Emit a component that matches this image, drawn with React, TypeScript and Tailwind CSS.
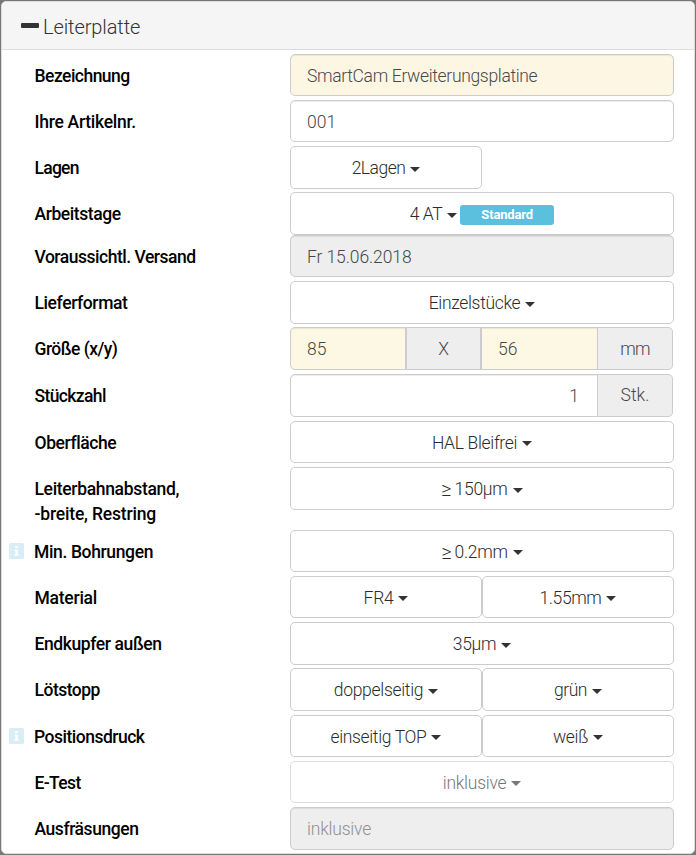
import type { ReactNode } from "react";

const box = "h-full border border-[#ccc] flex items-center";
const sunken = "shadow-[inset_0_1px_1px_rgba(0,0,0,0.075)]";

function Caret() {
  return (
    <span className="ml-[5px] mt-[3px] inline-block border-x-[5px] border-t-[5px] border-x-transparent border-t-[#333]" />
  );
}

function Select({ children, track = "tracking-[-0.3px]", extra, className = "w-full" }: { children: ReactNode; track?: string; extra?: ReactNode; className?: string }) {
  return (
    <div className={`${box} justify-center rounded-[5px] bg-white text-[#2b2b2b] ${className}`}>
      <span className={`pt-[2px] ${track}`}>{children}</span>
      <Caret />
      {extra}
    </div>
  );
}

function Input({ children, className, track = "tracking-normal" }: { children: ReactNode; className: string; track?: string }) {
  return (
    <div className={`${box} ${sunken} px-4 ${className}`}>
      <span className={`pt-[2px] ${track}`}>{children}</span>
    </div>
  );
}

function AtLeast({ children }: { children: ReactNode }) {
  return (
    <span className="flex items-center">
      <span className="mr-[3px] text-[20px] leading-[25px]">≥</span>
      {children}
    </span>
  );
}

function InfoIcon() {
  return (
    <svg className="ml-[8px] mr-[10px] h-4 w-[15px] shrink-0" viewBox="0 0 15 16">
      <rect width="15" height="16" rx="1.5" fill="#d9edf7" />
      <path d="M6.2 3h2.6v2H6.2zM5.5 6.5h3.3v5h1v1.3H5.2v-1.3h1.2V7.8h-.9z" fill="#fff" />
    </svg>
  );
}

function Row({ label, info, row, height, children, track }: { label: ReactNode; info?: boolean; row: string; height: string; children: ReactNode; track: string }) {
  return (
    <div className={`flex items-start ${row}`}>
      <div className={`flex w-[289px] shrink-0 items-center font-medium text-black ${height}`}>
        {info ? <InfoIcon /> : <span className="w-[33.5px] shrink-0" />}
        <span className={`whitespace-nowrap pt-[2px] ${track}`}>{label}</span>
      </div>
      <div className={`flex w-[384px] shrink-0 ${height}`}>{children}</div>
    </div>
  );
}

export default function App() {
  return (
    <div className="h-[855px] w-[696px] overflow-hidden bg-[#777] pt-px pl-px font-['Roboto','Liberation_Sans',sans-serif] text-[17.5px] font-light leading-[25px]">
      <div className="h-[853px] w-[694px] overflow-hidden rounded-[5px] border border-[#ddd] bg-white">
        <div className="-ml-px flex h-[48px] items-center border-b border-[#ddd] bg-[#f5f5f5] pl-5 text-[20px] text-[#333]">
          <span className="mr-1 mb-[1px] h-[5px] w-[18px] rounded-[1px] bg-[#333]" />
          <span className="pt-[3px] tracking-[-0.1px]">Leiterplatte</span>
        </div>
        <div className="-ml-px pt-1">
          <Row label="Bezeichnung" track="tracking-[-0.52px]" row="h-[46px]" height="h-[42px]">
            <Input className="w-full rounded-[5px] bg-[#fdf6e3] text-[#484848]" track="tracking-[-0.33px]">SmartCam Erweiterungsplatine</Input>
          </Row>
          <Row label="Ihre Artikelnr." track="tracking-[-0.27px]" row="h-[46px]" height="h-[42px]">
            <Input className="w-full rounded-[5px] bg-white text-[#484848]">001</Input>
          </Row>
          <Row label="Lagen" track="tracking-[-0.75px]" row="h-[46px]" height="h-[43px]">
            <Select className="w-[192px]" track="tracking-[-0.5px]">2Lagen</Select>
          </Row>
          <Row label="Arbeitstage" track="tracking-[-0.42px]" row="h-[43px]" height="h-[43px]">
            <Select
              track="tracking-[-0.5px]"
              extra={
                <span className="ml-[3px] mt-[3px] h-5 w-[94px] rounded-[3px] bg-[#5bc0de] text-center text-[13px] font-bold leading-[19px] tracking-[-0.15px] text-white">
                  Standard
                </span>
              }
            >
              4 AT
            </Select>
          </Row>
          <Row label="Voraussichtl. Versand" track="tracking-[-0.48px]" row="h-[46px]" height="h-[42px]">
            <Input className="w-full rounded-[5px] bg-[#eee] text-[#484848]" track="tracking-[-0.1px]">Fr 15.06.2018</Input>
          </Row>
          <Row label="Lieferformat" track="tracking-[-0.4px]" row="h-[46px]" height="h-[43px]">
            <Select track="tracking-[-0.33px]">Einzelstücke</Select>
          </Row>
          <Row label="Größe (x/y)" track="tracking-[-0.52px]" row="h-[47px]" height="h-[43px]">
            <Input className="w-[116px] rounded-l-[5px] bg-[#fcf8e3] text-[#484848]">85</Input>
            <div className={`${box} w-[75px] justify-center bg-[#eee] pt-[2px] text-[#484848]`}>X</div>
            <Input className="w-[117px] bg-[#fcf8e3] text-[#484848]">56</Input>
            <div className={`${box} w-[75px] justify-center rounded-r-[5px] border-l-0 bg-[#eee] pt-[2px] tracking-[-0.8px] text-[#484848]`}>mm</div>
          </Row>
          <Row label="Stückzahl" track="tracking-[-0.62px]" row="h-[47px]" height="h-[43px]">
            <Input className="w-[308px] justify-end rounded-l-[5px] bg-white pr-[18px] text-[#484848]">1</Input>
            <div className={`${box} w-[75px] justify-center rounded-r-[5px] border-l-0 bg-[#eee] text-[#484848]`}>Stk.</div>
          </Row>
          <Row label="Oberfläche" track="tracking-[-0.42px]" row="h-[46px]" height="h-[42px]">
            <Select track="tracking-[-0.33px]">HAL Bleifrei</Select>
          </Row>
          <Row
            label={
              <span className="block pt-[25px]">
                Leiterbahnabstand,
                <br />
                <span className="tracking-[-0.18px]">-breite, Restring</span>
              </span>
            }
            track="tracking-[-0.33px]"
            row="h-[63px]"
            height="h-[43px]"
          >
            <Select track="tracking-[-0.25px]"><AtLeast>150µm</AtLeast></Select>
          </Row>
          <Row label="Min. Bohrungen" track="tracking-[-0.36px]" info row="h-[46px]" height="h-[42px]">
            <Select track="tracking-[-0.3px]"><AtLeast>0.2mm</AtLeast></Select>
          </Row>
          <Row label="Material" track="tracking-[-0.25px]" row="h-[46px]" height="h-[42px]">
            <Select className="w-[192px]">FR4</Select>
            <Select className="w-[192px]" track="tracking-[-0.4px]">1.55mm</Select>
          </Row>
          <Row label="Endkupfer außen" track="tracking-[-0.4px]" row="h-[46px]" height="h-[43px]">
            <Select>35µm</Select>
          </Row>
          <Row label="Lötstopp" track="tracking-[-0.5px]" row="h-[47px]" height="h-[43px]">
            <Select className="w-[192px]">doppelseitig</Select>
            <Select className="w-[192px]" track="tracking-[-0.5px]">grün</Select>
          </Row>
          <Row label="Positionsdruck" track="tracking-[-0.5px]" info row="h-[46px]" height="h-[42px]">
            <Select className="w-[192px]" track="tracking-[-0.35px]">einseitig TOP</Select>
            <Select className="w-[192px]">weiß</Select>
          </Row>
          <Row label="E-Test" track="tracking-[-0.62px]" row="h-[46px]" height="h-[42px]">
            <Select className="w-full opacity-65" track="tracking-[-0.25px]">inklusive</Select>
          </Row>
          <Row label="Ausfräsungen" track="tracking-[-0.44px]" row="h-[43px]" height="h-[43px]">
            <Input className="w-full rounded-[5px] bg-[#eee] text-[#909090]" track="tracking-[-0.2px]">inklusive</Input>
          </Row>
        </div>
      </div>
    </div>
  );
}
